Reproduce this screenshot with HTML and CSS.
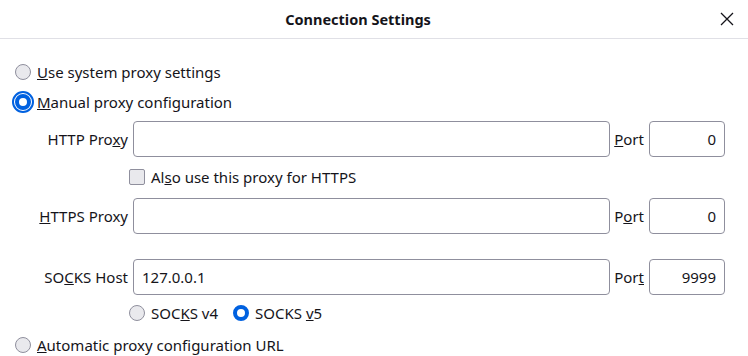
FILE: index.html
```html
<!DOCTYPE html>
<html lang="en">
<head>
  <meta charset="UTF-8">
  <title>Connection Settings</title>
  <link rel="stylesheet" href="styles.css">
</head>
<body>
  <div class="dialog">
    <div class="header">
      <div class="title">Connection Settings</div>
      <button class="close" aria-label="Close">
        <svg width="14" height="14" viewBox="0 0 14 14"><path d="M1 1L13 13M13 1L1 13" stroke="#15141a" stroke-width="1.3" fill="none"/></svg>
      </button>
    </div>

    <div class="content">
      <label class="radio-row"><input type="radio" name="mode"><span><u>U</u>se system proxy settings</span></label>
      <label class="radio-row manual"><input type="radio" name="mode" class="focused" checked><span><u>M</u>anual proxy configuration</span></label>

      <div class="proxy-grid">
        <div class="label">HTTP Pro<u>x</u>y</div>
        <input class="field" type="text">
        <div class="port-label"><u>P</u>ort</div>
        <input class="field port" type="text" value="0">

        <label class="check-row"><input type="checkbox"><span>Al<u>s</u>o use this proxy for HTTPS</span></label>

        <div class="label"><u>H</u>TTPS Proxy</div>
        <input class="field" type="text">
        <div class="port-label">P<u>o</u>rt</div>
        <input class="field port" type="text" value="0">

        <div class="label socks">SO<u>C</u>KS Host</div>
        <input class="field socks" type="text" value="127.0.0.1">
        <div class="port-label socks">Por<u>t</u></div>
        <input class="field port socks" type="text" value="9999">

        <div class="socks-version">
          <label class="radio-row"><input type="radio" name="ver"><span>SOC<u>K</u>S v4</span></label>
          <label class="radio-row"><input type="radio" name="ver" checked><span>SOCKS <u>v</u>5</span></label>
        </div>
      </div>

      <label class="radio-row auto"><input type="radio" name="mode"><span><u>A</u>utomatic proxy configuration URL</span></label>
    </div>
  </div>
</body>
</html>
```

FILE: styles.css
```css
body {
  margin: 0;
  font-family: "Noto Sans", "Open Sans", sans-serif;
  font-size: 15px;
  color: #15141a;
  background: #fff;
}

.dialog {
  width: 748px;
  height: 356px;
  overflow: hidden;
}

.header {
  display: flex;
  align-items: center;
  height: 38px;
  border-bottom: 1px solid #e0e0e6;
}

.title {
  flex: 1;
  text-align: center;
  font-weight: bold;
  font-size: 14.5px;
}

.close {
  width: 16px;
  height: 16px;
  margin: 0 13px 0 3px;
  padding: 0;
  border: none;
  background: none;
  display: flex;
  align-items: center;
  justify-content: center;
}

.content {
  padding: 0 0 0 15px;
}

.radio-row {
  display: flex;
  align-items: center;
  gap: 6px;
  height: 20px;
}

.content > .radio-row:first-child {
  margin-top: 23px;
}

.radio-row.manual {
  margin-top: 10px;
}

input[type="radio"] {
  appearance: none;
  margin: 0;
  width: 16px;
  height: 16px;
  border-radius: 50%;
  border: 1px solid #8f8f9d;
  background: #e9e9ed;
  box-sizing: border-box;
}

input[type="radio"]:checked {
  border: 4px solid #0061e0;
  background: #fff;
}

input[type="radio"].focused {
  outline: 2px solid #0061e0;
  outline-offset: 1px;
}

.proxy-grid {
  display: grid;
  grid-template-columns: 91px 1fr auto 76px;
  column-gap: 5px;
  align-items: center;
  margin: 9px 23px 0 22px;
}

.label {
  text-align: right;
}

.port-label {
  margin-left: -1px;
}

.field {
  height: 36px;
  box-sizing: border-box;
  border: 1px solid #8f8f9d;
  border-radius: 4px;
  font: inherit;
  color: inherit;
  padding: 0 8px;
  margin: 0;
  min-width: 0;
}

.port {
  text-align: right;
}

.check-row {
  grid-column: 2 / 5;
  display: flex;
  align-items: center;
  gap: 6px;
  margin: 11px 0 13px -4px;
  height: 17px;
}

input[type="checkbox"] {
  appearance: none;
  margin: 0;
  width: 16px;
  height: 16px;
  border: 1px solid #8f8f9d;
  border-radius: 2px;
  background: #e9e9ed;
}

.socks {
  margin-top: 25px;
}

.socks-version {
  grid-column: 2 / 5;
  display: flex;
  gap: 15px;
  margin: 8px 0 0 -4px;
}

.radio-row.auto {
  margin-top: 12px;
}
```
